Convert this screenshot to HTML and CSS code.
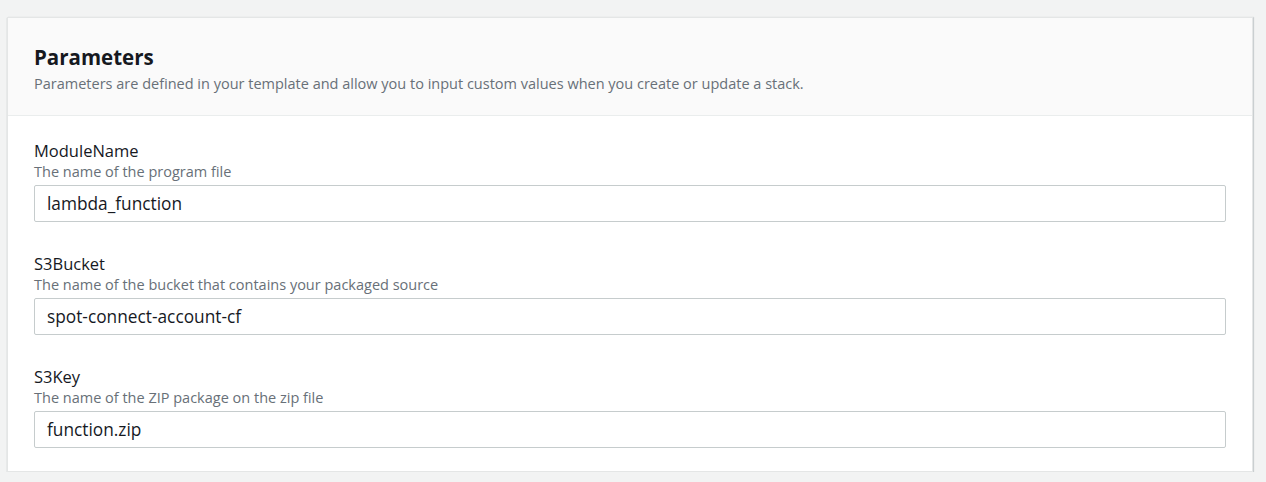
FILE: index.html
```html
<!DOCTYPE html>
<html lang="en">
<head>
<meta charset="utf-8">
<title>Parameters</title>
<link rel="stylesheet" href="styles.css">
</head>
<body>
<section class="card">
  <header class="card-header">
    <h2 class="title">Parameters</h2>
    <p class="subtitle">Parameters are defined in your template and allow you to input custom values when you create or update a stack.</p>
  </header>
  <div class="card-body">
    <div class="field">
      <div class="label">ModuleName</div>
      <div class="hint">The name of the program file</div>
      <div class="input">lambda_function</div>
    </div>
    <div class="field">
      <div class="label">S3Bucket</div>
      <div class="hint">The name of the bucket that contains your packaged source</div>
      <div class="input">spot-connect-account-cf</div>
    </div>
    <div class="field">
      <div class="label">S3Key</div>
      <div class="hint">The name of the ZIP package on the zip file</div>
      <div class="input">function.zip</div>
    </div>
  </div>
</section>
</body>
</html>
```

FILE: styles.css
```css
html, body {
  margin: 0;
  padding: 0;
  background: #f2f3f3;
  font-family: "Open Sans", "Noto Sans", sans-serif;
  color: #16191f;
}
body {
  padding: 17px 13px 0 7px;
}
.card {
  background: #ffffff;
  border: 1px solid #e4e6e6;
  box-shadow: 0 1px 1px rgba(0,27,42,0.25), 1px 0 1px rgba(0,27,42,0.12);
  height: 455px;
  box-sizing: border-box;
}
.card-header {
  background: #fafafa;
  border-bottom: 1px solid #eaeded;
  padding: 26px 26px 0 26px;
  height: 98px;
  box-sizing: border-box;
}
.title {
  margin: 0;
  font-size: 20.5px;
  font-weight: 700;
  line-height: 26px;
  color: #16191f;
}
.subtitle {
  margin: 4px 0 0 0;
  font-size: 14.5px;
  line-height: 20px;
  color: #687078;
}
.card-body {
  padding: 24px 26px 0 26px;
  display: flex;
  flex-direction: column;
  gap: 31px;
}
.label {
  font-size: 16.5px;
  line-height: 22px;
  color: #16191f;
}
.hint {
  font-size: 14.5px;
  line-height: 19px;
  color: #687078;
}
.input {
  margin-top: 4px;
  height: 37px;
  box-sizing: border-box;
  border: 1px solid #c6cccd;
  border-radius: 2px;
  padding: 0 12px;
  font-size: 17.3px;
  line-height: 35px;
  color: #16191f;
  background: #fff;
}
```
